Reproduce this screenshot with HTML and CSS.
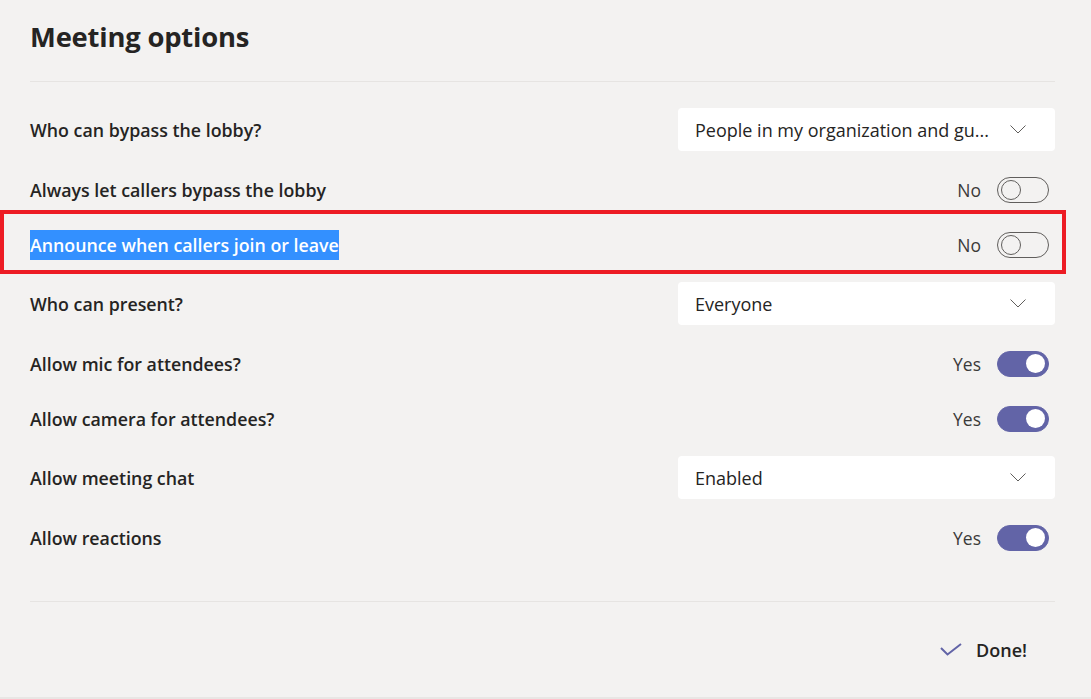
FILE: index.html
```html
<!DOCTYPE html>
<html lang="en">
<head>
<meta charset="utf-8">
<title>Meeting options</title>
<link rel="stylesheet" href="styles.css">
</head>
<body>
<div class="page">
  <header class="header">
    <h1 class="title">Meeting options</h1>
  </header>
  <section class="options">
    <div class="row row-dd">
      <span class="label">Who can bypass the lobby?</span>
      <div class="dropdown"><span class="dd-text">People in my organization and gu...</span>
        <svg class="chev" width="16" height="9" viewBox="0 0 16 9"><polyline points="0.5,0.5 8,8 15.5,0.5" fill="none" stroke="#605e5c" stroke-width="1"/></svg>
      </div>
    </div>
    <div class="row">
      <span class="label">Always let callers bypass the lobby</span>
      <div class="switch-wrap"><span class="state">No</span><span class="toggle"><span class="knob"></span></span></div>
    </div>
    <div class="row">
      <span class="label"><span class="selected">Announce when callers join or leave</span></span>
      <div class="switch-wrap"><span class="state">No</span><span class="toggle"><span class="knob"></span></span></div>
    </div>
    <div class="row row-dd">
      <span class="label">Who can present?</span>
      <div class="dropdown"><span class="dd-text">Everyone</span>
        <svg class="chev" width="16" height="9" viewBox="0 0 16 9"><polyline points="0.5,0.5 8,8 15.5,0.5" fill="none" stroke="#605e5c" stroke-width="1"/></svg>
      </div>
    </div>
    <div class="row">
      <span class="label">Allow mic for attendees?</span>
      <div class="switch-wrap"><span class="state">Yes</span><span class="toggle on"><span class="knob"></span></span></div>
    </div>
    <div class="row">
      <span class="label">Allow camera for attendees?</span>
      <div class="switch-wrap"><span class="state">Yes</span><span class="toggle on"><span class="knob"></span></span></div>
    </div>
    <div class="row row-dd">
      <span class="label">Allow meeting chat</span>
      <div class="dropdown"><span class="dd-text">Enabled</span>
        <svg class="chev" width="16" height="9" viewBox="0 0 16 9"><polyline points="0.5,0.5 8,8 15.5,0.5" fill="none" stroke="#605e5c" stroke-width="1"/></svg>
      </div>
    </div>
    <div class="row">
      <span class="label">Allow reactions</span>
      <div class="switch-wrap"><span class="state">Yes</span><span class="toggle on"><span class="knob"></span></span></div>
    </div>
  </section>
  <footer class="footer">
    <button class="done">
      <svg class="check" width="22" height="14" viewBox="0 0 22 14"><polyline points="1,5 7.5,11.5 21,1" fill="none" stroke="#6264a7" stroke-width="2"/></svg>
      <span>Done!</span>
    </button>
  </footer>
</div>
<div class="bottom-strip"></div>
<div class="annotation"></div>
</body>
</html>
```

FILE: styles.css
```css
* { box-sizing: border-box; }
html, body {
  margin: 0;
  padding: 0;
  background: #f3f2f1;
  font-family: "Open Sans", "Noto Sans", "Liberation Sans", sans-serif;
  color: #252423;
}
body { position: relative; height: 699px; overflow: hidden; }
.page {
  padding: 0 36px 0 30px;
}
.header {
  height: 82px;
  display: flex;
  align-items: center;
  padding-bottom: 8px;
  border-bottom: 1px solid #e6e4e2;
}
.title {
  margin: 0;
  font-size: 27.4px;
  font-weight: 700;
  letter-spacing: -0.2px;
}
.options {
  display: flex;
  flex-direction: column;
  gap: 22px;
  padding-top: 27px;
  padding-bottom: 47px;
  border-bottom: 1px solid #e6e4e2;
}
.row {
  display: flex;
  align-items: center;
  justify-content: space-between;
  height: 33px;
}
.row-dd { height: 43px; margin-top: -1px; }
.label {
  font-size: 17.8px;
  font-weight: 600;
  color: #252423;
}
.selected {
  background: #3390ff;
  color: #ffffff;
  padding: 3px 0;
}
.dropdown {
  width: 377px;
  height: 43px;
  background: #ffffff;
  border-radius: 4px;
  display: flex;
  align-items: center;
  justify-content: space-between;
  padding: 0 29px 0 17px;
}
.dd-text {
  font-size: 18px;
  color: #252423;
}
.chev { display: block; }
.switch-wrap {
  display: flex;
  align-items: center;
  gap: 16px;
  padding-right: 6px;
}
.state {
  font-size: 17.5px;
  color: #3b3a39;
}
.toggle {
  width: 52px;
  height: 26px;
  border-radius: 13px;
  border: 1px solid #605e5c;
  display: flex;
  align-items: center;
  padding: 0 3px;
}
.knob {
  width: 20px;
  height: 20px;
  border-radius: 50%;
  border: 1px solid #605e5c;
}
.toggle.on {
  background: #6264a7;
  border-color: #6264a7;
  justify-content: flex-end;
}
.toggle.on .knob {
  background: #ffffff;
  border: none;
  width: 19px;
  height: 19px;
}
.footer {
  height: 95px;
  display: flex;
  align-items: center;
  justify-content: flex-end;
  padding-right: 28px;
}
.done {
  display: flex;
  align-items: center;
  gap: 14px;
  background: none;
  border: none;
  padding: 0;
  font-family: inherit;
  font-size: 18px;
  font-weight: 600;
  color: #252423;
  cursor: pointer;
}
.check { display: block; }
.bottom-strip {
  height: 3px;
  background: #e8e6e4;
}
.annotation {
  position: absolute;
  left: 0;
  top: 210px;
  width: 1066px;
  height: 64px;
  border: 4px solid #ed1c24;
}
```
